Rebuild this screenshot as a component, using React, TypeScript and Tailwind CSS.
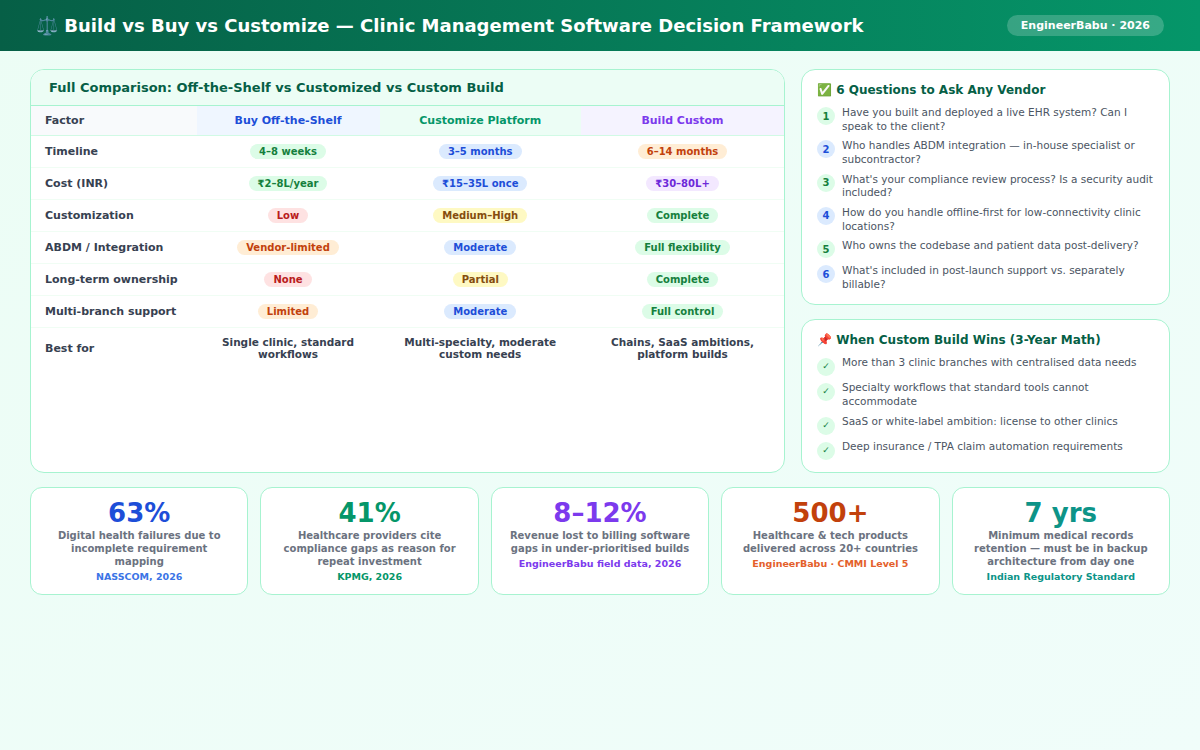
const font = { fontFamily: '"DejaVu Sans", sans-serif' };

const pillColors: Record<string, string> = {
  green: "bg-[#dcfce7] text-[#15803d]",
  blue: "bg-[#dbeafe] text-[#1d4ed8]",
  orange: "bg-[#ffedd5] text-[#c2410c]",
  purple: "bg-[#f3e8ff] text-[#6d28d9]",
  red: "bg-[#fee2e2] text-[#b91c1c]",
  yellow: "bg-[#fef9c3] text-[#854d0e]",
};

const rows = [
  { factor: "Timeline", cells: [["4–8 weeks", "green"], ["3–5 months", "blue"], ["6–14 months", "orange"]] },
  { factor: "Cost (INR)", cells: [["₹2–8L/year", "green"], ["₹15–35L once", "blue"], ["₹30–80L+", "purple"]] },
  { factor: "Customization", cells: [["Low", "red"], ["Medium–High", "yellow"], ["Complete", "green"]] },
  { factor: "ABDM / Integration", cells: [["Vendor-limited", "orange"], ["Moderate", "blue"], ["Full flexibility", "green"]] },
  { factor: "Long-term ownership", cells: [["None", "red"], ["Partial", "yellow"], ["Complete", "green"]] },
  { factor: "Multi-branch support", cells: [["Limited", "orange"], ["Moderate", "blue"], ["Full control", "green"]] },
];

const questions = [
  { q: "Have you built and deployed a live EHR system? Can I speak to the client?", blue: false },
  { q: "Who handles ABDM integration — in-house specialist or subcontractor?", blue: true },
  { q: "What's your compliance review process? Is a security audit included?", blue: false },
  { q: "How do you handle offline-first for low-connectivity clinic locations?", blue: true },
  { q: "Who owns the codebase and patient data post-delivery?", blue: false },
  { q: "What's included in post-launch support vs. separately billable?", blue: true },
];

const wins = [
  "More than 3 clinic branches with centralised data needs",
  "Specialty workflows that standard tools cannot accommodate",
  "SaaS or white-label ambition: license to other clinics",
  "Deep insurance / TPA claim automation requirements",
];

const stats = [
  { num: "63%", color: "text-[#1d4ed8]", label: "Digital health failures due to incomplete requirement mapping", src: "NASSCOM, 2026", srcColor: "text-[#3b74e6]" },
  { num: "41%", color: "text-[#059669]", label: "Healthcare providers cite compliance gaps as reason for repeat investment", src: "KPMG, 2026", srcColor: "text-[#059669]" },
  { num: "8–12%", color: "text-[#7c3aed]", label: "Revenue lost to billing software gaps in under-prioritised builds", src: "EngineerBabu field data, 2026", srcColor: "text-[#7c3aed]" },
  { num: "500+", color: "text-[#c2410c]", label: "Healthcare & tech products delivered across 20+ countries", src: "EngineerBabu · CMMI Level 5", srcColor: "text-[#e4602a]" },
  { num: "7 yrs", color: "text-[#0d9488]", label: "Minimum medical records retention — must be in backup architecture from day one", src: "Indian Regulatory Standard", srcColor: "text-[#0d9488]" },
];

const Pill = ({ text, color }: { text: string; color: string }) => (
  <span className={`rounded-[10px] px-[9px] py-[1px] text-[10px] font-bold leading-[13px] ${pillColors[color]}`}>{text}</span>
);

const gridCols = "grid grid-cols-[165.5px_183px_201.5px_1fr]";

export default function App() {
  return (
    <div style={font} className="min-h-[750px] w-[1200px] bg-gradient-to-br from-[#ecfdf5] to-[#f0fdfa]">
      <header className="flex h-[51px] items-center justify-between bg-gradient-to-r from-[#065f46] to-[#059669] px-[36px]">
        <h1 className="text-[18px] font-bold text-white">⚖️ Build vs Buy vs Customize — Clinic Management Software Decision Framework</h1>
        <span className="rounded-[20px] bg-white/20 px-[14px] py-[3px] text-[11px] font-bold leading-[15px] text-white">EngineerBabu · 2026</span>
      </header>

      <div className="flex flex-col gap-[14px] px-[30px] pt-[18px]">
        <div className="grid h-[404px] grid-cols-[755px_369px] gap-[16px]">
          <section className="overflow-hidden rounded-[14px] border border-[#a7f3d0] bg-white">
            <h2 className="flex h-[36px] items-center border-b border-[#a7f3d0] bg-[#ecfdf5] px-[18px] text-[13px] font-bold text-[#065f46]">
              Full Comparison: Off-the-Shelf vs Customized vs Custom Build
            </h2>
            <div className={`${gridCols} h-[30px] items-stretch border-b border-[#d1fae5] text-[11px] font-bold`}>
              <div className="flex items-center bg-[#f8fafc] pl-[14px] pt-[1px] text-[#374151]">Factor</div>
              <div className="flex items-center justify-center bg-[#eff6ff] pt-[1px] text-[#1d4ed8]">Buy Off-the-Shelf</div>
              <div className="flex items-center justify-center bg-[#ecfdf5] pt-[1px] text-[#059669]">Customize Platform</div>
              <div className="flex items-center justify-center bg-[#f5f3ff] pt-[1px] text-[#7c3aed]">Build Custom</div>
            </div>
            {rows.map((r) => (
              <div key={r.factor} className={`${gridCols} h-[32px] items-center border-b border-[#f0fdf4] text-[11px]`}>
                <div className="pl-[14px] pt-[1px] font-bold text-[#374151]">{r.factor}</div>
                {r.cells.map(([text, color]) => (
                  <div key={text + color} className="flex items-center justify-center">
                    <Pill text={text} color={color} />
                  </div>
                ))}
              </div>
            ))}
            <div className={`${gridCols} h-[41px] items-center text-[10.5px] font-bold leading-[12px] text-[#374151]`}>
              <div className="pl-[14px] pt-[1px] text-[11px]">Best for</div>
              <div className="px-[14px] pb-[2px] text-center">Single clinic, standard workflows</div>
              <div className="px-[14px] pb-[2px] text-center">Multi-specialty, moderate custom needs</div>
              <div className="px-[14px] pb-[2px] text-center">Chains, SaaS ambitions, platform builds</div>
            </div>
          </section>

          <div className="flex flex-col gap-[14px]">
            <section className="h-[236px] rounded-[14px] border border-[#a7f3d0] bg-white px-[15px] pt-[13px]">
              <h3 className="mb-[8px] text-[12px] font-bold leading-[15px] text-[#065f46]">✅ 6 Questions to Ask Any Vendor</h3>
              <div className="flex flex-col gap-[6px]">
                {questions.map((item, i) => (
                  <div key={i} className="flex gap-[7px]">
                    <span className={`mt-[1px] flex h-[18px] w-[18px] shrink-0 items-center justify-center rounded-full text-[10px] font-bold ${item.blue ? "bg-[#dbeafe] text-[#1d4ed8]" : "bg-[#dcfce7] text-[#15803d]"}`}>{i + 1}</span>
                    <p className="text-[10.5px] leading-[13.65px] text-[#4b5563]">{item.q}</p>
                  </div>
                ))}
              </div>
            </section>

            <section className="flex-1 rounded-[14px] border border-[#a7f3d0] bg-white px-[15px] pt-[13px]">
              <h3 className="mb-[8px] text-[12px] font-bold leading-[15px] text-[#065f46]">📌 When Custom Build Wins (3-Year Math)</h3>
              <div className="flex flex-col gap-[7px]">
                {wins.map((w) => (
                  <div key={w} className="flex gap-[7px]">
                    <span className="mt-[1.5px] -mb-[1.5px] flex h-[18px] w-[18px] shrink-0 items-center justify-center rounded-full bg-[#dcfce7] text-[9px] font-bold text-[#15803d]">✓</span>
                    <p className="text-[10.5px] leading-[13.65px] text-[#4b5563]">{w}</p>
                  </div>
                ))}
              </div>
            </section>
          </div>
        </div>

        <div className="grid h-[108px] grid-cols-5 gap-[12px]">
          {stats.map((s) => (
            <div key={s.num} className="rounded-[12px] border border-[#a7f3d0] bg-white px-[14px] pt-[10px] text-center">
              <div className={`text-[26px] font-bold leading-[30px] ${s.color}`}>{s.num}</div>
              <div className="mt-[1px] text-[10px] font-bold leading-[13px] text-[#6b7280]">{s.label}</div>
              <div className={`mt-[2px] text-[9.5px] font-bold leading-[13px] ${s.srcColor}`}>{s.src}</div>
            </div>
          ))}
        </div>
      </div>
    </div>
  );
}
